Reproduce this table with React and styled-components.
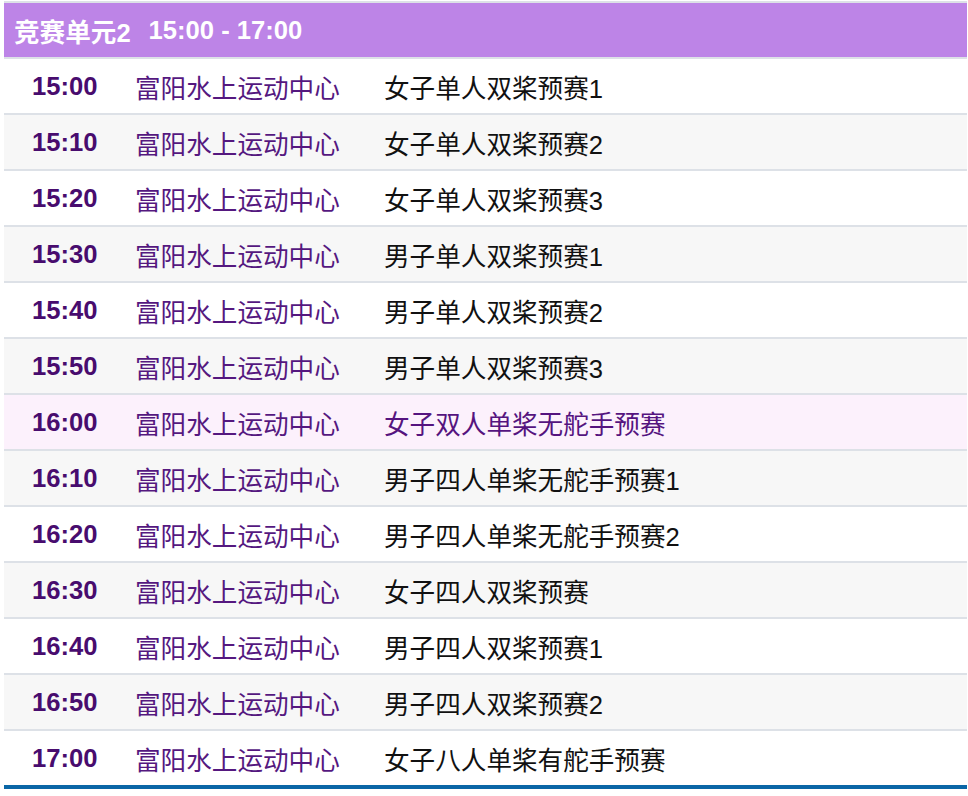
import React from 'react';
import styled, { createGlobalStyle } from 'styled-components';

const GlobalStyle = createGlobalStyle`
  body {
    margin: 0;
    background: #fff;
    font-family: 'Liberation Sans', 'Noto Sans CJK SC', Arial, sans-serif;
  }
`;

const PageWrap = styled.div`
  padding: 1px 1px 0 4px;
`;

const ScheduleTable = styled.div`
  border-top: 2px solid #dde1e7;
  border-bottom: 4px solid #0a66a6;
`;

const UnitHeader = styled.div`
  display: flex;
  align-items: center;
  height: 54px;
  padding-left: 10px;
  background: #bd84e7;
  color: #fff;
  font-size: 25.6px;
  font-weight: 700;
  span {
    margin-left: 18px;
  }
`;

const Row = styled.div`
  display: grid;
  grid-template-columns: 131px 249px 1fr;
  align-items: center;
  height: 54px;
  border-top: 2px solid #dde1e7;
  background: ${({ $highlight, $even }) => ($highlight ? '#fcf1fc' : $even ? '#f7f7f7' : '#fff')};
  font-size: 25.6px;
`;

const TimeCell = styled.div`
  padding-left: 28px;
  font-weight: 700;
  color: #480c6e;
`;

const VenueCell = styled.div`
  color: #55187f;
`;

const EventCell = styled.div`
  color: ${({ $highlight }) => ($highlight ? '#55147f' : '#111')};
`;

const schedule = [
  { time: '15:00', event: '女子单人双桨预赛1' },
  { time: '15:10', event: '女子单人双桨预赛2' },
  { time: '15:20', event: '女子单人双桨预赛3' },
  { time: '15:30', event: '男子单人双桨预赛1' },
  { time: '15:40', event: '男子单人双桨预赛2' },
  { time: '15:50', event: '男子单人双桨预赛3' },
  { time: '16:00', event: '女子双人单桨无舵手预赛', highlight: true },
  { time: '16:10', event: '男子四人单桨无舵手预赛1' },
  { time: '16:20', event: '男子四人单桨无舵手预赛2' },
  { time: '16:30', event: '女子四人双桨预赛' },
  { time: '16:40', event: '男子四人双桨预赛1' },
  { time: '16:50', event: '男子四人双桨预赛2' },
  { time: '17:00', event: '女子八人单桨有舵手预赛' },
];

const App = () => {
  return (
    <PageWrap>
      <GlobalStyle />
      <ScheduleTable>
        <UnitHeader>
          竞赛单元2<span>15:00 - 17:00</span>
        </UnitHeader>
        {schedule.map((item, index) => (
          <Row key={item.time} $even={index % 2 === 1} $highlight={item.highlight}>
            <TimeCell>{item.time}</TimeCell>
            <VenueCell>富阳水上运动中心</VenueCell>
            <EventCell $highlight={item.highlight}>{item.event}</EventCell>
          </Row>
        ))}
      </ScheduleTable>
    </PageWrap>
  );
};

export default App;
